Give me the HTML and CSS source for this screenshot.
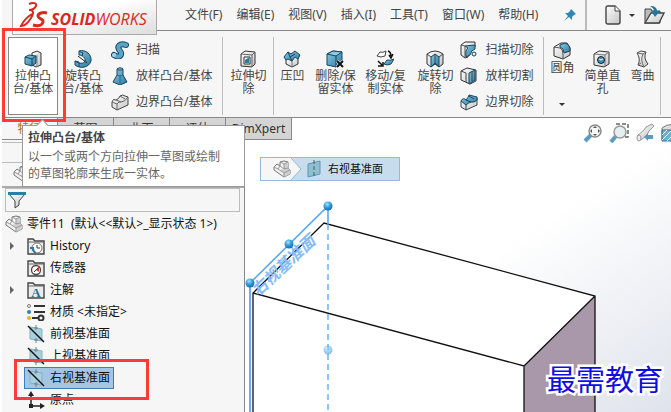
FILE: index.html
```html
<!DOCTYPE html>
<html lang="zh-CN">
<head>
    <meta charset="UTF-8">
    <title>SOLIDWORKS</title>
    <link rel="stylesheet" href="styles.css">
</head>
<body>
    <!-- shared icons -->
    <svg class="defs" aria-hidden="true">
        <defs>
            <linearGradient id="blue" x1="0" y1="0" x2="1" y2="1">
                <stop offset="0" stop-color="#8fcbe4"/>
                <stop offset="1" stop-color="#2a779f"/>
            </linearGradient>
            <linearGradient id="grey" x1="0" y1="0" x2="1" y2="1">
                <stop offset="0" stop-color="#ffffff"/>
                <stop offset="1" stop-color="#c4c4c4"/>
            </linearGradient>
            <radialGradient id="ball" cx="0.4" cy="0.3" r="0.7">
                <stop offset="0" stop-color="#a5e2ff"/>
                <stop offset="0.5" stop-color="#359fdf"/>
                <stop offset="1" stop-color="#146bb0"/>
            </radialGradient>
            <symbol id="plane" viewBox="0 0 18 18">
                <path d="M3 4 15 1V14L3 17Z" fill="#8fc0d2" stroke="#5f96ac"/>
                <path d="M9 0V18" stroke="#4b5b62" stroke-dasharray="4 2"/>
            </symbol>
            <symbol id="plane-off" viewBox="0 0 18 18">
                <path d="M3 2 15 4V16L3 14Z" fill="#a9d0de" stroke="#86b1c4"/>
                <path d="M9 0V5M9 13V18M7 3H11M7 15H11" stroke="#6f858f"/>
                <path d="M1 1 17 17" stroke="#111" stroke-width="1.5"/>
            </symbol>
            <symbol id="part" viewBox="0 0 18 18">
                <path d="M1 7 4 4 7 6V2L11 1 15 2V8L17 10V14L11 17 1 10Z" fill="#f2f2f2" stroke="#777" stroke-linejoin="round"/>
                <path d="M11 4 15 2V8L17 10V14L11 17V13L7 10 11 9Z" fill="#cfcfcf"/>
                <path d="M7 2 11 4 15 2M11 4V9L7 6M11 9 15 8M1 7 5 9 7 6M5 9 11 13 17 10M11 13V17" fill="none" stroke="#999"/>
            </symbol>
            <symbol id="folder" viewBox="0 0 18 18">
                <path d="M1 17V2H6L8 4H17V17Z" fill="#ececec" stroke="#444" stroke-width="1.4"/>
                <path d="M1 5H17" stroke="#666"/>
            </symbol>
        </defs>
    </svg>

    <header class="menubar">
        <div class="logo">
            <svg class="logo-mark" viewBox="0 0 30 28" aria-hidden="true">
                <path d="M10 3C14 1 18 2 17 5C16 7 13 9 10 9C15 9 15 12 12 17C9 22 5 25 2 25C4 21 8 16 13 13" fill="none" stroke="#da291c" stroke-width="2"/>
                <path d="M28 12C24 11 19 12 19 15C19 18 25 18 24 21C23 25 18 25 14 24" fill="none" stroke="#da291c" stroke-width="3"/>
            </svg>
            <span class="logo-text"><b>SOLID</b>WORKS</span>
        </div>
        <nav class="menus">
            <button type="button">文件(F)</button>
            <button type="button">编辑(E)</button>
            <button type="button">视图(V)</button>
            <button type="button">插入(I)</button>
            <button type="button">工具(T)</button>
            <button type="button">窗口(W)</button>
            <button type="button">帮助(H)</button>
        </nav>
        <button type="button" class="pin" aria-label="固定">
            <svg viewBox="0 0 14 14"><path d="M8 1 13 6 11 7 9 9 9 12 6 9 1 13 5 8 2 5H5L7 3Z" fill="#2f86b5"/></svg>
        </button>
        <div class="quick">
            <button type="button" aria-label="新建">
                <svg width="16" height="20" viewBox="0 0 16 20"><path d="M1 3Q1 1 3 1H10L15 6V17Q15 19 13 19H3Q1 19 1 17Z" fill="url(#grey)" stroke="#444" stroke-width="1.4"/><path d="M10 1V6H15" fill="#fff" stroke="#444"/></svg>
            </button>
            <span class="caret"></span>
            <button type="button" aria-label="打开">
                <svg width="22" height="20" viewBox="0 0 22 20"><path d="M2 18V4H8L9 6H17V18Z" fill="#bbb" stroke="#444"/><path d="M2 18 8 8H21L16 18Z" fill="url(#grey)" stroke="#444" stroke-width="1.3"/><path d="M7 1C12 1 14 3 14 6H17L12 12 8 6H11C11 4 9 2 7 1Z" fill="#23779f"/></svg>
            </button>
            <span class="caret"></span>
        </div>
    </header>

    <section class="ribbon">
        <div class="group">
            <div class="extrude">
                <button type="button" class="tool active" aria-describedby="tip">
                    <svg viewBox="0 0 18 18"><path d="M8 3 13 1 17 3V15L12 17 8 15Z" fill="url(#grey)" stroke="#333"/><path d="M13 5V17" stroke="#888"/><path d="M1 7 5 5 12 6V13L8 16 1 14Z" fill="url(#blue)" stroke="#17465f"/><path d="M1 7 8 9 12 6M8 9V16" fill="none" stroke="#17465f"/></svg>
                    <span>拉伸凸<br>台/基体</span>
                </button>
                <div class="mark mark-tool"></div>
                <div class="tooltip" id="tip" role="tooltip">
                    <b>拉伸凸台/基体</b>
                    <p>以一个或两个方向拉伸一草图或绘制<br>的草图轮廓来生成一实体。</p>
                </div>
            </div>
            <button type="button" class="tool">
                <svg viewBox="0 0 18 18"><path d="M5 1C12-1 18 5 17 11C15 18 6 19 1 15L1 11C5 14 10 14 11 11C12 8 8 5 5 5Z" fill="url(#blue)" stroke="#17465f"/><path d="M1 11 5 12V17M5 1 9 3 8 6" fill="none" stroke="#17465f"/><path d="M4 6 13 13" stroke="#222"/></svg>
                <span>旋转凸<br>台/基体</span>
            </button>
            <div class="stack">
                <button type="button">
                    <svg viewBox="0 0 18 18"><path d="M3 14C9 18 12 13 9 10C5 5 9 2 15 4" fill="none" stroke="#17465f" stroke-width="6" stroke-linecap="round"/><path d="M3 14C9 18 12 13 9 10C5 5 9 2 15 4" fill="none" stroke="#5aa5c7" stroke-width="4" stroke-linecap="round"/><ellipse cx="3" cy="14" rx="2" ry="2" fill="#a4d5ea"/></svg>
                    扫描
                </button>
                <button type="button">
                    <svg viewBox="0 0 18 18"><path d="M6 2Q9 0 12 2V8L16 15 9 18 2 15 6 8Z" fill="url(#blue)" stroke="#17465f"/><ellipse cx="9" cy="2" rx="3" ry="1" fill="#c9e6f2" stroke="#17465f"/><path d="M6 8 9 9 12 8M9 9V17" fill="none" stroke="#2a6989"/></svg>
                    放样凸台/基体
                </button>
                <button type="button">
                    <svg viewBox="0 0 18 18"><path d="M1 9Q2 5 5 7Q8 6 9 3Q12 1 14 3L17 4V12L6 17 1 14Z" fill="url(#grey)" stroke="#444"/><path d="M1 9 6 11Q8 8 10 9Q14 9 17 4M6 11V17M5 7 10 9M9 3 14 6" fill="none" stroke="#666"/></svg>
                    边界凸台/基体
                </button>
            </div>
        </div>
        <div class="group">
            <button type="button" class="tool">
                <svg viewBox="0 0 18 18"><path d="M2 4 6 1 16 2V14L13 17 2 16Z" fill="url(#grey)" stroke="#333"/><path d="M2 4 13 5 16 2M13 5V17" fill="none" stroke="#666"/><path d="M5 7H11V14H5Z" fill="#fff" stroke="#333"/><path d="M6 13V10L9 8H10V13Z" fill="#287ba3"/></svg>
                <span>拉伸切<br>除</span>
            </button>
        </div>
        <div class="group">
            <button type="button" class="tool small">
                <svg viewBox="0 0 18 18"><path d="M3 9V14L9 17 15 14V8" fill="url(#grey)" stroke="#333"/><path d="M9 11V17" stroke="#777"/><path d="M1 7 5 2 8 4 12 1 17 5 15 9 12 7 9 11 5 9 3 10Z" fill="url(#blue)" stroke="#17465f"/><path d="M5 2 7 7 12 4M7 7 9 11" fill="none" stroke="#17465f"/></svg>
                <span>压凹</span>
            </button>
            <button type="button" class="tool">
                <svg viewBox="0 0 18 18"><path d="M1 4 7 1 16 2V12L10 17 1 15Z" fill="url(#blue)" stroke="#17465f"/><path d="M1 4 7 1 16 2 10 6Z" fill="#8fcbe4" stroke="#17465f"/><path d="M10 6V17" fill="none" stroke="#17465f"/><path d="M11 11 17 17M17 11 11 17" stroke="#fff" stroke-width="3"/><path d="M11 11 17 17M17 11 11 17" stroke="#111" stroke-width="2"/></svg>
                <span>删除/保<br>留实体</span>
            </button>
            <button type="button" class="tool">
                <svg viewBox="0 0 18 18"><path d="M1 6 4 2Q7 3 10 1L9 6Q5 8 1 6Z" fill="#fff" stroke="#444"/><path d="M8 14 11 10Q14 11 18 9L15 14Q11 16 8 14Z" fill="url(#blue)" stroke="#17465f"/><path d="M12 1Q15 2 15 6M13 5 15 8 17 4M2 11 6 15M2 16H7V12" fill="none" stroke="#111" stroke-width="1.5"/></svg>
                <span>移动/复<br>制实体</span>
            </button>
            <button type="button" class="tool">
                <svg viewBox="0 0 18 18"><path d="M1 4Q9-2 17 4V14L13 17 9 14 5 17 1 14Z" fill="url(#grey)" stroke="#333"/><path d="M9 4 13 7V17L9 13 5 17V7Z" fill="url(#blue)" stroke="#17465f"/><path d="M9 4V13M1 4 5 7M17 4 13 7" stroke="#444"/></svg>
                <span>旋转切<br>除</span>
            </button>
            <div class="stack cuts">
                <button type="button">
                    <svg viewBox="0 0 18 18"><path d="M1 4 5 1H15V6Q8 7 8 16L5 17 1 14Z" fill="url(#grey)" stroke="#333"/><path d="M5 5 15 4V8Q11 9 10 14L6 16Q5 9 8 7Z" fill="url(#blue)" stroke="#17465f"/><circle cx="14" cy="13" r="2" fill="#dceef5" stroke="#17465f"/><path d="M1 4 5 5V16" fill="none" stroke="#555"/></svg>
                    扫描切除
                </button>
                <button type="button">
                    <svg viewBox="0 0 18 18"><path d="M1 4 7 1 16 3V14L10 17 1 13Z" fill="url(#grey)" stroke="#333"/><path d="M9 6 15 3V13L9 17Z" fill="url(#blue)" stroke="#17465f"/><path d="M1 4 6 6V15M12 4V14" stroke="#444" fill="none"/></svg>
                    放样切割
                </button>
                <button type="button">
                    <svg viewBox="0 0 18 18"><path d="M1 8V14L6 17 17 12V5" fill="url(#grey)" stroke="#444"/><path d="M1 8Q3 4 6 7Q8 5 9 2Q13 3 17 4V7Q14 10 11 9Q8 10 6 12Z" fill="url(#blue)" stroke="#17465f"/><path d="M6 7 11 9M9 3 14 6M6 12V17" fill="none" stroke="#17465f"/></svg>
                    边界切除
                </button>
            </div>
        </div>
        <div class="group">
            <button type="button" class="tool small fillet">
                <svg viewBox="0 0 18 18"><path d="M1 5 8 1H14L17 6V13L10 17 1 14Z" fill="url(#grey)" stroke="#333"/><path d="M7 3 12 1Q16 2 17 6V9L11 11Q11 6 7 5Z" fill="url(#blue)" stroke="#17465f"/><path d="M1 5 7 6Q10 7 10 12V17" fill="none" stroke="#555"/></svg>
                <span>圆角</span>
                <span class="caret"></span>
            </button>
            <button type="button" class="tool medium">
                <svg viewBox="0 0 18 18"><path d="M1 4 6 1 16 2V14L11 17 1 15Z" fill="url(#grey)" stroke="#333"/><path d="M1 4 12 5 16 2M12 5V17" fill="none" stroke="#777"/><circle cx="8" cy="10" r="3.5" fill="#3a8fb8" stroke="#222"/><path d="M6 9Q8 11 10 9" fill="none" stroke="#fff"/></svg>
                <span>简单直<br>孔</span>
            </button>
            <button type="button" class="tool small">
                <svg viewBox="0 0 18 18"><path d="M4 3 8 1 13 2Q10 8 15 14L11 17 5 15Q8 9 4 3Z" fill="url(#grey)" stroke="#444"/><path d="M4 3 10 4 13 2M10 4Q7 10 11 17M5 15 8 13" fill="none" stroke="#666"/></svg>
                <span>弯曲</span>
            </button>
        </div>
    </section>

    <div class="tabrow">
        <nav class="tabs">
            <button type="button" class="current">特征</button>
            <button type="button">草图</button>
            <button type="button">曲面</button>
            <button type="button">评估</button>
            <button type="button" class="wide">DimXpert</button>
        </nav>
        <div class="viewtools">
            <button type="button" aria-label="整屏显示全图">
                <svg viewBox="0 0 20 20"><path d="M2 18 8 12" stroke="#5c9dbd" stroke-width="4"/><circle cx="12" cy="8" r="6" fill="#f4f6f7" stroke="#8b8b8b" stroke-width="1.5"/><path d="M12 3 14 5H10ZM12 13 10 11H14ZM7 8 9 6V10ZM17 8 15 10V6Z" fill="#555"/></svg>
            </button>
            <button type="button" aria-label="局部放大">
                <svg viewBox="0 0 20 20"><path d="M7 1H19V14H14" fill="none" stroke="#666" stroke-width="1.5" stroke-dasharray="4 2"/><path d="M2 19 7 13" stroke="#5c9dbd" stroke-width="4"/><circle cx="11" cy="9" r="6" fill="#e5eef3" stroke="#9a9a9a" stroke-width="1.5"/></svg>
            </button>
            <button type="button" aria-label="上一视图">
                <svg viewBox="0 0 20 20"><path d="M2 13 9 7 11 4 17 1 19 3 14 8 12 12 6 17Z" fill="url(#grey)" stroke="#999"/><ellipse cx="4" cy="15" rx="2" ry="3" fill="#eee" stroke="#999"/><path d="M9 14 13 10V12H18V16H13V18Z" fill="#5c9dbd"/></svg>
            </button>
            <button type="button" aria-label="剖面视图">
                <svg viewBox="0 0 20 20"><path d="M1 5Q10-2 19 5V17H1Z" fill="#ddd" stroke="#777"/><path d="M1 7H12V18H1Z" fill="#6eb0cf" stroke="#34718f"/><path d="M1 12 6 7M1 17 11 7M6 18 12 12" stroke="#fff"/></svg>
            </button>
        </div>
    </div>

    <main>
        <aside class="panel">
            <div class="strip"></div>
            <div class="panel-tabs"><svg class="icon"><use href="#part"/></svg></div>
            <div class="filter">
                <svg class="icon" viewBox="0 0 18 18"><path d="M1 3 7 10V17L11 14V10L17 3Z" fill="url(#grey)" stroke="#444"/><path d="M0 1H18V4H0Z" fill="#2c7fa8"/></svg>
            </div>
            <ul class="tree">
                <li class="root"><svg class="icon"><use href="#part"/></svg><span>零件11&nbsp; (默认&lt;&lt;默认&gt;_显示状态 1&gt;)</span></li>
                <li><i class="twisty"></i><svg class="icon" viewBox="0 0 18 18"><use href="#folder"/><circle cx="10" cy="11" r="5" fill="#fff" stroke="#777"/><path d="M10 8V11H13" fill="none" stroke="#333"/><path d="M3 11H6Q6 15 9 16" fill="none" stroke="#287ba3" stroke-width="2"/></svg><span>History</span></li>
                <li><i></i><svg class="icon" viewBox="0 0 18 18"><use href="#folder"/><circle cx="9" cy="11" r="4.5" fill="#fff" stroke="#444" stroke-width="1.3"/><path d="M9 11 12 7V13Z" fill="#e33b26"/><path d="M7 13 11 9" stroke="#333"/></svg><span>传感器</span></li>
                <li><i class="twisty"></i><svg class="icon" viewBox="0 0 18 18"><use href="#folder"/><text x="9" y="16" text-anchor="middle" class="note">A</text></svg><span>注解</span></li>
                <li><i></i><svg class="icon" viewBox="0 0 18 18"><path d="M7 3H18M7 9H18M5 15H12" stroke="#333" stroke-width="2"/><circle cx="2" cy="3" r="1.5" fill="#fff" stroke="#777"/><circle cx="2" cy="9" r="2" fill="#2786b4"/><circle cx="2" cy="15" r="2" fill="#f2b40c"/><circle cx="14" cy="15" r="2.5" fill="none" stroke="#333" stroke-width="2"/></svg><span>材质 &lt;未指定&gt;</span></li>
                <li><i></i><svg class="icon"><use href="#plane-off"/></svg><span>前视基准面</span></li>
                <li><i></i><svg class="icon"><use href="#plane-off"/></svg><span>上视基准面</span></li>
                <li class="marked"><i></i><a href="#right" class="selected"><svg class="icon"><use href="#plane-off"/></svg><span>右视基准面</span></a><div class="mark mark-row"></div></li>
                <li><i></i><svg class="icon" viewBox="0 0 18 18"><path d="M4 2V15H16" fill="none" stroke="#222" stroke-width="1.5"/><path d="M1 5 4 0 7 5ZM13 12 18 15 13 18ZM2 13H6V17H2Z" fill="#222"/></svg><span>原点</span></li>
            </ul>
        </aside>

        <section class="viewport">
            <svg class="scene" viewBox="0 0 426 272" preserveAspectRatio="xMinYMin slice" role="img" aria-label="模型">
                <path d="M8 153 79 83 350 156V280H8Z" fill="#fff"/>
                <path d="M279 226 350 156V280H279Z" fill="#a898a9"/>
                <path d="M8 280V153L79 83 350 156V280M8 153 279 226 350 156M279 226V280" fill="none" stroke="#111" stroke-width="1.3"/>
                <path d="M83 84V280" stroke="#58a7f8" stroke-width="1.3" stroke-dasharray="6 4"/>
                <path d="M83 84V66L5 143" fill="none" stroke="#58a7f8" stroke-width="1.6"/>
                <path d="M5 143V280" stroke="#69aef5" stroke-width="2"/>
                <text x="13" y="157" transform="rotate(-43 13 157)" class="plane-name">右视基准面</text>
                <circle cx="83" cy="66" r="4.5" fill="url(#ball)"/>
                <circle cx="44" cy="104" r="4.5" fill="url(#ball)"/>
                <circle cx="5" cy="143" r="4.5" fill="url(#ball)"/>
                <circle cx="83" cy="210" r="4.5" fill="url(#ball)" opacity="0.45"/>
            </svg>
            <nav class="crumbs">
                <a href="#part1" class="crumb-part" aria-label="零件11"><svg class="icon"><use href="#part"/></svg></a>
                <svg class="chevron" viewBox="0 0 11 22" preserveAspectRatio="none"><path d="M0 0 10 11 0 22Z" fill="#f6f6f6"/><path d="M0 0 10 11 0 22" fill="none" stroke="#9ab6d8"/></svg>
                <a href="#right" class="crumb-plane"><svg class="icon"><use href="#plane"/></svg>右视基准面</a>
            </nav>
            <div class="watermark">最需教育</div>
        </section>
    </main>
</body>
</html>
```
FILE: styles.css
```css
* {
    box-sizing: border-box;
}
body {
    margin: 0;
    padding-left: 2px;
    min-height: 100vh;
    display: flex;
    flex-direction: column;
    background: #fff;
    color: #444;
    font: 12px/16px "Noto Sans", "Noto Sans CJK SC", sans-serif;
    overflow: hidden;
}
button {
    margin: 0;
    padding: 0;
    border: 0;
    background: none;
    color: inherit;
    font: inherit;
    white-space: nowrap;
    cursor: pointer;
}
a {
    color: inherit;
    text-decoration: none;
}
svg {
    display: block;
    flex: none;
}
.defs {
    position: absolute;
    width: 0;
    height: 0;
}
.icon {
    width: 18px;
    height: 18px;
}
.caret {
    border: 3px solid transparent;
    border-top-color: #333;
    border-bottom: 0;
}

/* menu bar */
.menubar {
    position: relative;
    display: flex;
    height: 31px;
    background: #f6f6f6;
    border-bottom: 1px solid #888;
}
.logo {
    position: absolute;
    left: 10px;
    top: 0;
    z-index: 2;
    display: flex;
    align-items: center;
    gap: 2px;
    width: 145px;
    height: 35px;
    padding-left: 6px;
    background: linear-gradient(to bottom right, #fff 40%, #ddd);
    border: 1px solid #aaa;
    border-top: 0;
}
.logo-mark {
    width: 30px;
    height: 28px;
    margin-bottom: 4px;
}
.logo-text {
    padding-top: 4px;
    color: #da291c;
    font: italic 16px/16px "Open Sans", sans-serif;
}
.menus {
    display: flex;
    gap: 14px;
    padding-left: 183px;
}
.pin {
    margin-left: auto;
    padding: 0 8px;
}
.pin svg {
    width: 14px;
    height: 14px;
}
.quick {
    display: flex;
    align-items: center;
    gap: 8px;
    width: 86px;
    padding-left: 18px;
    border-left: 2px solid #bbb;
    overflow: hidden;
}
.quick .caret {
    flex: none;
}

/* ribbon */
.ribbon {
    display: flex;
    height: 87px;
    padding: 6px 6px 2px;
    background: #f6f6f6;
    border-bottom: 1px solid #888;
}
.group {
    display: flex;
    border-right: 1px solid #bbb;
}
.extrude {
    position: relative;
    display: flex;
}
.tool {
    display: flex;
    flex-direction: column;
    align-items: center;
    gap: 1px;
    width: 50px;
    padding-top: 13px;
    line-height: 13px;
}
.tool svg,
.stack svg {
    width: 18px;
    height: 18px;
}
.small {
    width: 36px;
}
.medium {
    width: 44px;
}
.active {
    padding-top: 12px;
    background: #fff;
    border: 1px solid #888;
}
.fillet {
    padding-top: 5px;
}
.fillet .caret {
    margin-top: 28px;
}
.stack {
    display: flex;
    flex-direction: column;
    padding: 0 10px 0 3px;
}
.stack button {
    display: flex;
    align-items: center;
    gap: 7px;
    height: 26px;
}
.cuts {
    padding-left: 0;
}
.mark {
    position: absolute;
    z-index: 3;
    pointer-events: none;
    border: 3px solid #ff3b36;
}
.mark-tool {
    left: -6px;
    top: -9px;
    width: 64px;
    height: 94px;
}
.tooltip {
    position: absolute;
    left: 14px;
    top: 88px;
    z-index: 4;
    width: 223px;
    height: 62px;
    padding: 3px 5px;
    background: #fff;
    border: 1px solid #999;
    line-height: 17px;
    white-space: nowrap;
}
.tooltip::before {
    content: "";
    position: absolute;
    left: 15px;
    top: -5px;
    width: 8px;
    height: 8px;
    background: #fff;
    border: solid #999;
    border-width: 1px 0 0 1px;
    transform: rotate(45deg);
}
.tooltip p {
    margin: 2px 0 0;
    color: #666;
}

/* tabs and view tools */
.tabrow {
    display: flex;
    justify-content: space-between;
    height: 22px;
}
.tabs {
    display: flex;
}
.tabs button {
    width: 56px;
    background: #d4d4d4;
    border: solid #888;
    border-width: 0 1px 1px 0;
    color: #333;
}
.tabs .current {
    background: #f6f6f6;
    color: #b8691c;
}
.tabs .wide {
    width: 66px;
}
.viewtools {
    display: flex;
    gap: 6px;
    padding-top: 5px;
    margin-right: -10px;
    z-index: 1;
}
.viewtools svg {
    width: 20px;
    height: 20px;
}

/* feature tree */
main {
    flex: 1;
    display: flex;
}
.panel {
    flex: none;
    width: 243px;
    background: #f6f6f6;
    border-right: 1px solid #888;
    color: #111;
}
.strip {
    height: 21px;
    margin-top: 2px;
    border: solid #bbb;
    border-width: 1px 0;
}
.panel-tabs {
    height: 25px;
    padding: 2px 11px;
    border-bottom: 2px solid #aaa;
}
.filter {
    height: 24px;
    margin: 0 4px 0 3px;
    padding: 2px;
    border: 1px solid #bbb;
}
.tree {
    margin: 0;
    padding: 1px 0 0 3px;
    list-style: none;
    white-space: nowrap;
}
.tree li {
    display: flex;
    align-items: center;
    gap: 5px;
    height: 22px;
}
.tree li.root {
    gap: 4px;
}
.tree i {
    width: 17px;
}
.twisty::before {
    content: "";
    display: block;
    width: 4px;
    margin-left: 5px;
    border: 4px solid transparent;
    border-left-color: #666;
    border-right: 0;
}
.note {
    fill: #246f96;
    font: bold 13px "Liberation Serif", serif;
}
.tree .marked {
    position: relative;
}
.selected {
    display: flex;
    align-items: center;
    gap: 5px;
    height: 22px;
    margin-left: -3px;
    padding: 0 3px 0 2px;
    background: #a5c5e4;
    border: 1px solid #3d7fb2;
}
.mark-row {
    left: 9px;
    top: -8px;
    width: 135px;
    height: 41px;
}

/* graphics area */
.viewport {
    position: relative;
    flex: 1;
    min-width: 0;
    padding: 17px 15px;
    background: linear-gradient(to bottom right, #fff 50%, #dfe3ec);
    overflow: hidden;
}
.scene {
    position: absolute;
    left: 0;
    top: 0;
    width: 100%;
    height: 100%;
}
.plane-name {
    fill: #84bbf8;
    font-size: 16px;
    font-weight: bold;
    font-style: italic;
}
.crumbs {
    position: relative;
    display: inline-flex;
    height: 24px;
    background: #c7ddee;
    border: 1px solid #9ab6d8;
    color: #111;
    font-size: 11px;
}
.crumbs a {
    display: flex;
    align-items: center;
}
.crumb-part {
    padding-left: 12px;
    background: #f6f6f6;
}
.chevron {
    width: 11px;
    height: 22px;
}
.crumb-plane {
    gap: 5px;
    padding: 0 16px 0 3px;
}
.watermark {
    position: absolute;
    right: 8px;
    bottom: 17px;
    color: #0d0de8;
    font: 29px/34px "Noto Sans CJK SC", sans-serif;
    paint-order: stroke;
    -webkit-text-stroke: 5px #fff;
}
```
